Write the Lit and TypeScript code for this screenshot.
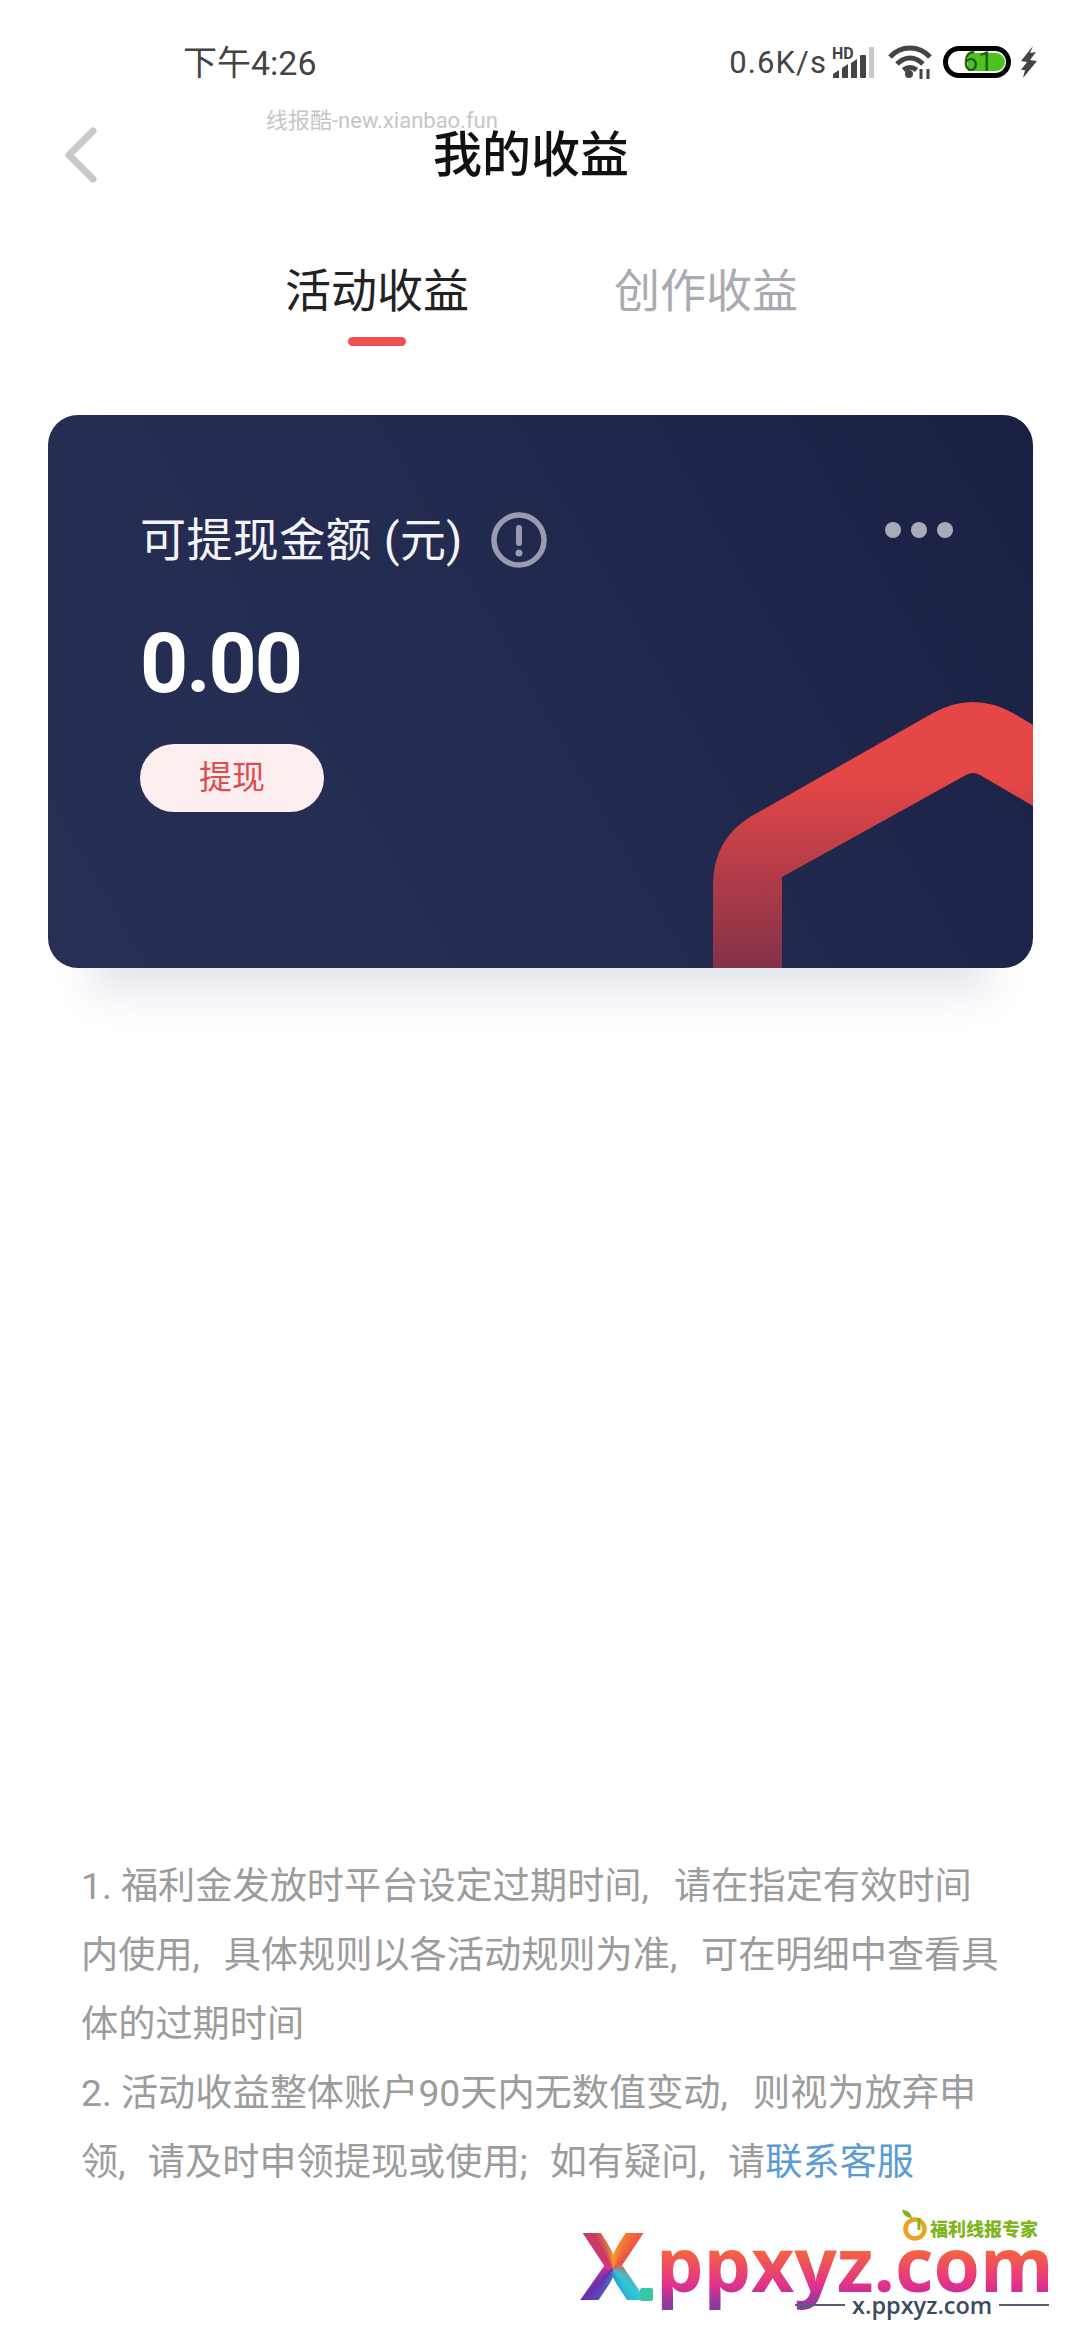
import { LitElement, html, css } from "lit";
import { customElement } from "lit/decorators.js";

@customElement("app-root")
export class AppRoot extends LitElement {
  static styles = css`
    :host {
      display: block;
      position: relative;
      width: 1080px;
      height: 2340px;
      overflow: hidden;
      background: #fff;
      font-family: Roboto, "Noto Sans CJK SC", sans-serif;
    }
    .status {
      height: 124px;
      display: flex;
      align-items: center;
      padding-left: 183px;
      color: #444;
    }
    .time { font-size: 34px; margin-top: -4px; }
    .status-right {
      margin-left: auto;
      display: flex;
      align-items: center;
      padding-right: 42px;
    }
    .speed { font-size: 31px; letter-spacing: 1.1px; margin-right: 5px; }
    .signal { width: 42px; height: 32px; margin-right: 14px; overflow: visible; }
    .wifi { width: 44px; height: 34px; margin-right: 11px; }
    .battery {
      position: relative;
      width: 68px;
      height: 32px;
      box-sizing: border-box;
      border: 5px solid #000;
      border-radius: 16px;
      margin-right: 9px;
    }
    .battery-fill {
      position: absolute;
      left: 20px;
      right: 1px;
      top: 2px;
      bottom: 2px;
      background: #4ec21f;
      border-radius: 0 10px 10px 0;
    }
    .battery-text {
      position: absolute;
      left: 15px;
      top: 0;
      font-size: 27px;
      line-height: 22px;
      color: #1f5c14;
    }
    .bolt { width: 18px; height: 32px; }
    .nav {
      height: 62px;
      display: flex;
      align-items: center;
      padding-left: 65px;
    }
    .back { width: 32px; height: 56px; }
    .title {
      margin: 2px 0 0 336px;
      font-size: 49px;
      font-weight: 500;
      color: #111;
      line-height: 62px;
    }
    .mark {
      position: absolute;
      left: 266px;
      top: 107px;
      font-size: 22px;
      line-height: 28px;
      color: #c6c6c6;
    }
    .tabs {
      display: flex;
      gap: 145px;
      padding: 79px 0 0 285px;
    }
    .tab {
      display: flex;
      flex-direction: column;
      align-items: center;
      font-size: 46px;
      line-height: 52px;
      color: #222;
    }
    .tab.off { color: #aaaab2; }
    .bar {
      width: 58px;
      height: 9px;
      margin-top: 20px;
      border-radius: 5px;
      background: #ee5253;
    }
    .card {
      position: relative;
      margin: 69px 47px 0 48px;
      height: 553px;
      box-sizing: border-box;
      padding: 95px 80px 0 92px;
      border-radius: 30px;
      background: linear-gradient(60deg, #282f55 0%, #242b50 45%, #1a2044 100%);
      box-shadow: 0 70px 36px -45px rgba(120, 130, 170, 0.2);
    }
    .shape {
      position: absolute;
      inset: 0;
      width: 985px;
      height: 553px;
      border-radius: 30px;
    }
    .row { position: relative; display: flex; align-items: center; }
    .label { font-size: 46px; letter-spacing: 0.4px; line-height: 60px; color: #f4f4f8; }
    .info { width: 56px; height: 56px; margin-left: 28px; }
    .dots {
      margin-left: auto;
      align-self: flex-start;
      margin-top: 12px;
      display: flex;
      gap: 10px;
    }
    .dots i {
      width: 16px;
      height: 16px;
      border-radius: 50%;
      background: #a9abb9;
    }
    .amount {
      position: relative;
      margin-top: 52px;
      font-size: 84px;
      letter-spacing: -2px;
      line-height: 84px;
      font-weight: 700;
      color: #fff;
    }
    .withdraw {
      position: relative;
      margin-top: 38px;
      width: 184px;
      height: 68px;
      border-radius: 34px;
      background: #fdeff0;
      color: #df4d4f;
      font-size: 33px;
      line-height: 68px;
      text-align: center;
    }
    .notes {
      margin-top: 884px;
      padding-left: 81px;
      font-size: 37.2px;
      line-height: 69px;
      color: #9c9c9c;
      white-space: nowrap;
    }
    .notes div { height: 69px; }
    .c { margin-right: 16px; }
    .m { margin-right: 14.5px; }
    .t { margin-right: 13px; }
    .link { color: #5a9bd4; }
    .logo {
      position: absolute;
      left: 575px;
      top: 2205px;
      width: 480px;
      height: 120px;
    }
    .x {
      position: absolute;
      left: 3px;
      top: 12px;
      font-size: 92px;
      line-height: 100px;
      font-weight: 800;
      font-family: Inter, sans-serif;
      color: transparent;
      background: conic-gradient(from 0deg at 50% 52%, #f5a030, #f05040 12%, #30c8d8 38%, #2a9ad0 48%, #6a2fb0 62%, #e0308c 78%, #c83c60 92%, #f5a030);
      -webkit-background-clip: text;
      background-clip: text;
    }
    .dot {
      position: absolute;
      left: 65px;
      top: 83px;
      width: 13px;
      height: 13px;
      background: #35c9a8;
      border-radius: 2px;
    }
    .word {
      position: absolute;
      left: 81px;
      top: 8px;
      font-size: 75px;
      line-height: 100px;
      font-weight: 700;
      font-family: "Open Sans", sans-serif;
      color: transparent;
      background: linear-gradient(180deg, #f8702e 30%, #e4308c 72%, #8a3aa0 92%);
      -webkit-background-clip: text;
      background-clip: text;
    }
    .sub {
      position: absolute;
      left: 220px;
      top: 82px;
      display: flex;
      align-items: center;
      gap: 7px;
      font-family: "Open Sans", sans-serif;
      font-size: 23.5px;
      line-height: 36px;
      font-weight: 600;
      color: #3b4a5c;
    }
    .sub i { width: 50px; height: 2px; background: #566070; }
    .brand {
      position: absolute;
      left: 355px;
      top: 14px;
      font-size: 18px;
      line-height: 22px;
      font-weight: 900;
      color: #7fb51f;
    }
    .brand-ico {
      position: absolute;
      left: 325px;
      top: 4px;
      width: 28px;
      height: 32px;
    }
  `;

  render() {
    return html`
      <div class="status">
        <span class="time">下午4:26</span>
        <div class="status-right">
          <span class="speed">0.6K/s</span>
          <svg class="signal" viewBox="0 0 42 32">
            <text x="0" y="13" font-size="16" font-weight="700" font-family="Roboto, sans-serif" fill="#444">HD</text>
            <path d="M1 32v-4l6-4v8z M10 32V22l6-4v14z M19 32V17l6-4v19z" fill="#444"/>
            <rect x="28" y="9" width="6" height="23" rx="1" fill="#444"/>
            <rect x="37" y="1" width="5" height="31" fill="#c9c9c9"/>
          </svg>
          <svg class="wifi" viewBox="0 0 44 34" fill="none" stroke="#444" stroke-width="5">
            <path d="M2 12C13 0 31 0 42 12"/>
            <path d="M9 19c8-8 18-8 26 0"/>
            <path d="M15.500 25c4-3.500 9-3.500 13 0"/>
            <circle cx="21" cy="29" r="4" fill="#444" stroke="none"/>
            <path d="M33 24v10M40 24v10" stroke-width="3"/>
          </svg>
          <div class="battery">
            <div class="battery-fill"></div>
            <span class="battery-text">61</span>
          </div>
          <svg class="bolt" viewBox="0 0 18 32">
            <path d="M13 0 1 15l6 1-6 8 4 0-2 8 14-17-7-1 6-8-6 1z" fill="#444"/>
          </svg>
        </div>
      </div>
      <div class="nav">
        <svg class="back" viewBox="0 0 32 56" fill="none" stroke="#c9c9c9" stroke-width="7" stroke-linecap="round" stroke-linejoin="round">
          <path d="M28 4 4 28l24 24"/>
        </svg>
        <span class="title">我的收益</span>
      </div>
      <div class="mark">线报酷-new.xianbao.fun</div>
      <div class="tabs">
        <div class="tab">活动收益<div class="bar"></div></div>
        <div class="tab off">创作收益</div>
      </div>
      <div class="card">
        <svg class="shape" viewBox="0 0 985 553">
          <defs>
            <linearGradient id="g" x1="0" y1="280" x2="0" y2="553" gradientUnits="userSpaceOnUse">
              <stop offset="0.3" stop-color="#e54646"/>
              <stop offset="1" stop-color="#83324a"/>
            </linearGradient>
          </defs>
          <path d="M665 553V470Q665 425 702 402L885 298Q925 276 965 298L985 310V391L932 360Q925 356 918 360L734 462V553Z" fill="url(#g)"/>
        </svg>
        <div class="row">
          <span class="label">可提现金额 (元)</span>
          <svg class="info" viewBox="0 0 56 56">
            <circle cx="28" cy="28" r="25" fill="none" stroke="#9a9bb0" stroke-width="5.500"/>
            <rect x="25" y="13" width="6" height="21" rx="3" fill="#9a9bb0"/>
            <circle cx="28" cy="41" r="3.500" fill="#9a9bb0"/>
          </svg>
          <div class="dots"><i></i><i></i><i></i></div>
        </div>
        <div class="amount">0.00</div>
        <div class="withdraw">提现</div>
      </div>
      <div class="notes">
        <div>1. 福利金发放时平台设定过期时间<span class="c">,</span> 请在指定有效时间</div>
        <div>内使用<span class="m">,</span> 具体规则以各活动规则为准<span class="m">,</span> 可在明细中查看具</div>
        <div>体的过期时间</div>
        <div>2. 活动收益整体账户90天内无数值变动<span class="c">,</span> 则视为放弃申</div>
        <div>领<span class="t">,</span> 请及时申领提现或使用<span class="t">;</span> 如有疑问<span class="t">,</span> 请<span class="link">联系客服</span></div>
      </div>
      <div class="logo">
        <span class="x">X</span>
        <span class="dot"></span>
        <span class="word">ppxyz.com</span>
        <svg class="brand-ico" viewBox="0 0 28 32" fill="none">
          <path d="M2 1c6 0 9 3 10 8C7 9 3 6 2 1z" fill="#7fb51f"/>
          <circle cx="15" cy="20" r="9.500" stroke="#f0a020" stroke-width="4.500"/>
          <path d="M19 9v12" stroke="#7fb51f" stroke-width="3"/>
        </svg>
        <span class="brand">福利线报专家</span>
        <div class="sub"><i></i>x.ppxyz.com<i></i></div>
      </div>
    `;
  }
}
